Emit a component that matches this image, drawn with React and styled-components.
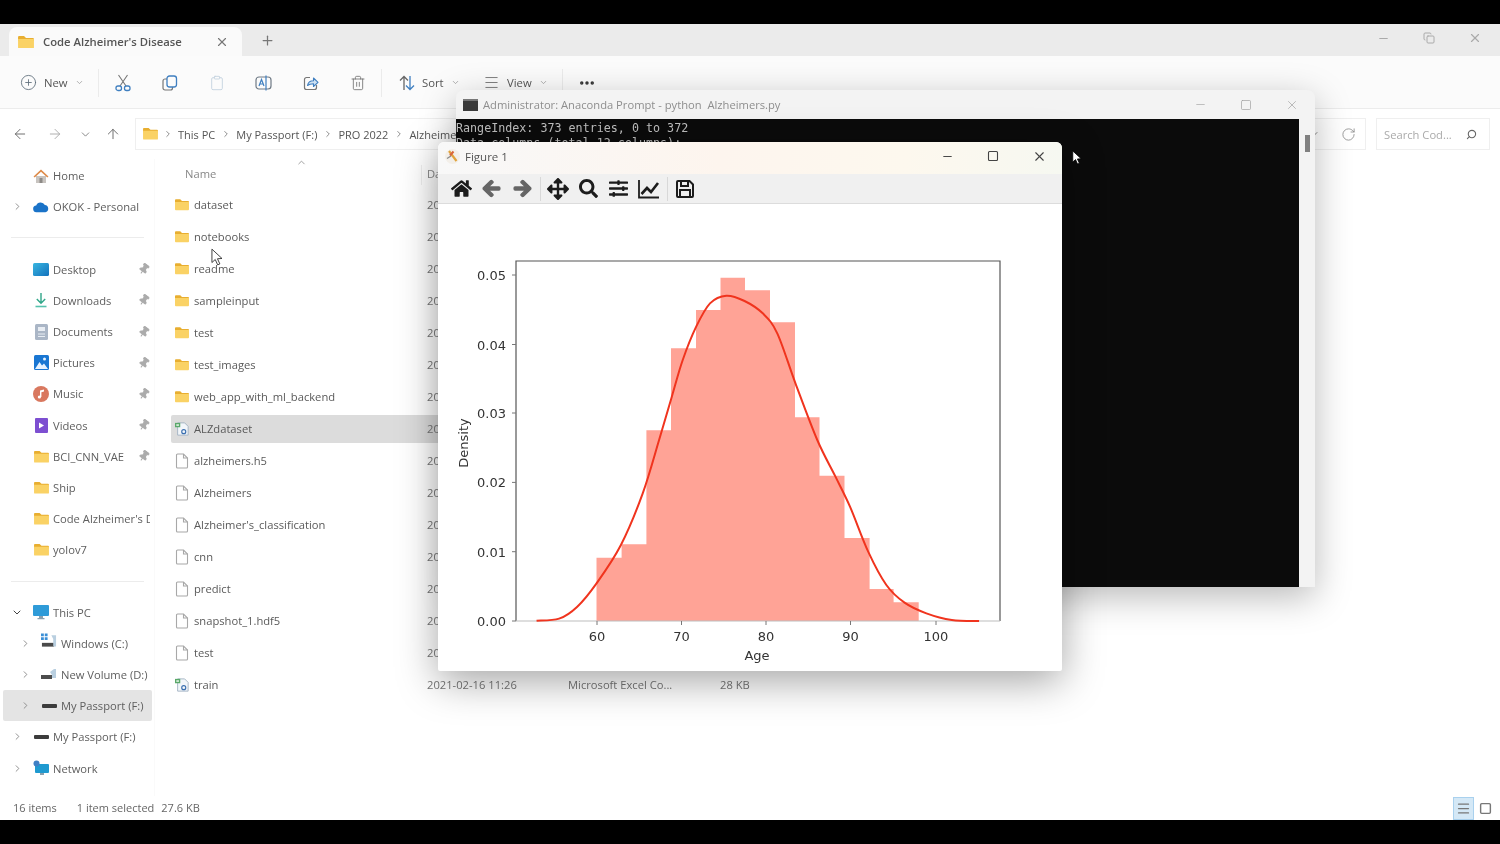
import React from "react";
import styled, { createGlobalStyle } from "styled-components";
import { Copy, Clipboard, Trash2, ChevronDown, ChevronRight, ChevronUp, ArrowLeft, ArrowRight, ArrowUp, Plus, X, Minus, Square, RotateCw, Search, Pin, Menu, MoreHorizontal, CirclePlus } from "lucide-react";
import { FaHome, FaArrowLeft, FaArrowRight, FaArrowsAlt, FaSearch, FaSlidersH } from "react-icons/fa";

const Global = createGlobalStyle`
  html, body { margin: 0; padding: 0; background: #000; overflow: hidden; }
  * { box-sizing: border-box; }
`;

const Stage = styled.div`
  position: relative; width: 1500px; height: 844px; padding-top: 24px; background: #000;
  font-family: "Open Sans", "Noto Sans", sans-serif; color: #5a5a5a; overflow: hidden; filter: blur(0.35px);
`;
const Explorer = styled.div`
  height: 796px; display: flex; flex-direction: column; background: #fff;
`;
const TabBar = styled.div`
  height: 32px; flex: none; display: flex; align-items: flex-end; background: #ebebeb; padding-left: 9px;
`;
const Tab = styled.div`
  width: 233px; height: 29px; background: #fafafa; border-radius: 8px 8px 0 0; display: flex; align-items: center;
  padding: 0 13px 0 9px; font-size: 11.3px; font-weight: 600; color: #555;
`;
const TabTitle = styled.span`margin-left: 9px; flex: 1; white-space: nowrap;`;
const NewTab = styled.div`margin: 0 0 4px 18px; height: 24px; display: flex; align-items: center; color: #777;`;
const WinControls = styled.div`
  margin-left: auto; align-self: stretch; display: flex; align-items: center; padding: 0 ${p => p.$pr || 0}px ${p => p.$pb || 0}px 0; color: ${p => p.$c || "#aaa"};
`;
const WinCtl = styled.div`width: 46px; display: flex; justify-content: center; align-items: center;`;

const CommandBar = styled.div`
  height: 53px; flex: none; display: flex; align-items: center; padding: 1px 0 0 12px; background: #fbfbfb; border-bottom: 1px solid #ececec;
`;
const CmdText = styled.span`font-size: 11.3px; color: #555; white-space: nowrap;`;
const CmdBtn = styled.div`
  width: ${p => p.$w}px; height: 32px; flex: none; display: flex; align-items: center; justify-content: ${p => p.$center ? "center" : "flex-start"};
  padding-left: ${p => p.$pl || 0}px; gap: ${p => p.$gap || 0}px; color: ${p => p.$c || "#6a6a6a"};
`;
const CmdSep = styled.div`width: 1px; height: 28px; flex: none; background: #ebebeb;`;

const AddressRow = styled.div`
  height: 50px; flex: none; display: flex; align-items: center; padding: 0 10px 0 5px; background: #fff;
`;
const NavBtn = styled.div`
  width: ${p => p.$w}px; flex: none; display: flex; justify-content: center; color: ${p => p.$c || "#666"};
`;
const AddressBox = styled.div`
  flex: 1; margin-left: 4px; height: 32px; border: 1px solid #efefef; display: flex; align-items: center; padding: 0 9px 0 7px; font-size: 11px; color: #555;
`;
const Crumb = styled.span`white-space: nowrap;`;
const CrumbSep = styled.span`display: flex; width: ${p => p.$w || 21}px; flex: none; justify-content: center; color: #777;`;
const AddressEnd = styled.div`margin-left: auto; display: flex; align-items: center; gap: 21px; color: #888;`;
const SearchBox = styled.div`
  width: 114px; height: 32px; margin-left: 10px; flex: none; border: 1px solid #efefef; display: flex; align-items: center; justify-content: space-between;
  padding: 0 12px 0 7px; font-size: 11.2px; color: #aaa;
`;

const Body = styled.div`flex: 1; min-height: 0; display: flex;`;
const Sidebar = styled.nav`
  width: 155px; flex: none; padding-top: 1px; border-right: 1px solid #fafafa; font-size: 11.2px; color: #5e5e5e;
`;
const SideRow = styled.div`
  height: 31.2px; width: 149px; margin-left: 3px; padding: 0 2px 0 ${p => 8 + (p.$indent || 0)}px; display: flex; align-items: center; border-radius: 2px;
  background: ${p => p.$selected ? "#e4e4e4" : "transparent"}; white-space: nowrap;
`;
const ChevronSlot = styled.span`width: 12px; flex: none; display: flex; justify-content: center; color: #888; margin-right: 10px;`;
const SideIcon = styled.span`width: 16px; height: 16px; flex: none; display: flex; align-items: center; justify-content: center;`;
const SideLabel = styled.span`margin-left: 4px; overflow: hidden; flex: 1; min-width: 0;`;
const PinMark = styled.span`flex: none; width: 12px; display: flex; color: #ababab; transform: rotate(35deg); margin-left: 2px;`;
const SideRule = styled.div`height: 31.2px; display: flex; align-items: center; padding-left: 11px;
  &::after { content: ""; width: 133px; height: 1px; background: #ececec; }`;

const FileList = styled.div`margin-left: 16px; width: 1140px; flex: none; display: flex; flex-direction: column; font-size: 11.2px; color: #5a5a5a;`;
const HeaderRow = styled.div`
  height: 29.5px; flex: none; display: grid; grid-template-columns: 256px 141px 152px 1fr; align-items: center; color: #888;
`;
const HeaderName = styled.div`
  display: flex; align-items: center; padding-left: 14px; height: 100%; position: relative;
  &::after { content: ""; position: absolute; right: 5px; top: 6px; bottom: 4px; width: 1px; background: #eee; }
`;
const SortCaret = styled.span`display: flex; margin-left: 80px; transform: translateY(-11px); color: #999;`;
const FileRow = styled.div`
  height: 28px; flex: none; margin: 2px 0; display: grid; grid-template-columns: 256px 141px 152px 1fr; align-items: center; background: ${p => p.$selected ? "#dcdcdc" : "transparent"};
  border-radius: 2px; white-space: nowrap;
`;
const FileName = styled.div`display: flex; align-items: center; gap: 5px; padding-left: 4px;`;
const FileIconSlot = styled.span`width: 14px; height: 16px; flex: none; display: flex; align-items: center; justify-content: center;`;
const Muted = styled.div`color: #777;`;

const StatusBar = styled.div`
  height: 24px; flex: none; display: flex; align-items: center; font-size: 11px; color: #666; padding: 0 0 0 13px; background: #fff;
`;
const StatusText = styled.span`margin-right: ${p => p.$mr}px; white-space: nowrap; transform: translateY(-1px);`;
const ViewBtn = styled.span`
  width: 21px; height: 23px; display: flex; align-items: center; justify-content: center; color: #777; flex: none;
  background: ${p => p.$on ? "#d4e8f6" : "transparent"}; border: 1px solid ${p => p.$on ? "#a9d1ee" : "transparent"};
`;
const ViewBtns = styled.div`margin-left: auto; display: flex; gap: 1px; padding-right: 4px;`;

const ConsoleWin = styled.section`
  position: absolute; left: 456px; top: 90px; width: 859px; height: 497px; display: flex; flex-direction: column;
  background: #f3f3f3; border-radius: 8px 8px 0 0; box-shadow: 0 10px 36px rgba(0,0,0,.28); overflow: hidden;
`;
const ConsoleTitle = styled.header`
  height: 29px; flex: none; display: flex; align-items: center; padding-left: 7px; font-size: 11.2px; color: #8e8e8e;
`;
const ConsoleName = styled.span`margin-left: 5px; flex: 1; white-space: pre;`;
const ConsoleBody = styled.div`flex: 1; min-height: 0; display: flex;`;
const Terminal = styled.pre`
  flex: 1; margin: 0; background: #0b0b0b; color: #c0c0c0; font: 11.7px/14.5px "DejaVu Sans Mono", monospace; padding: 2px 0 0 0; overflow: hidden;
`;
const ScrollTrack = styled.div`width: 16px; flex: none; padding: 16px 0 0 6px;`;
const ScrollThumb = styled.div`width: 5px; height: 17px; background: #808080;`;

const FigureWin = styled.section`
  position: absolute; left: 438px; top: 142px; width: 624px; height: 529px; display: flex; flex-direction: column;
  background: #fff; border-radius: 6px 6px 2px 2px; box-shadow: 0 10px 40px rgba(0,0,0,.36); overflow: hidden;
`;
const FigureTitle = styled.header`
  height: 32px; flex: none; display: flex; align-items: center; padding: 0 0 4px 7px; font-size: 11.5px; color: #555;
  background: linear-gradient(90deg, #f8f8f8, #fdf5ee 45%, #fdf8ee 75%, #f6f8f1);
`;
const FigureName = styled.span`margin-left: 5px; flex: 1;`;
const FigureTools = styled.div`
  height: 30px; flex: none; display: flex; align-items: center; padding-left: 8px; background: #f0f0f0; border-bottom: 1px solid #dcdcdc; color: #1c1c1c;
`;
const ToolBtn = styled.span`width: 30.5px; flex: none; display: flex; justify-content: center; color: ${p => p.$c || "#1c1c1c"};`;
const ToolSep = styled.span`width: 1px; height: 24px; flex: none; margin: 0 2px; background: #d8d8d8;`;
const PlotArea = styled.div`flex: 1; min-height: 0; display: flex;`;
const Cursor = styled.svg`position: absolute; left: ${p => p.$x}px; top: ${p => p.$y}px;`;

const Folder = ({ s = 15 }) => (
  <svg width={s} height={s * 0.87} viewBox="0 0 16 14">
    <path d="M0 2a1 1 0 0 1 1-1h5l2 2h7a1 1 0 0 1 1 1v2H0z" fill="#e8ae30" />
    <path d="M0 4h16v8.5a1 1 0 0 1-1 1H1a1 1 0 0 1-1-1z" fill="#fad265" />
  </svg>
);
const Doc = () => (
  <svg width="14" height="16" viewBox="0 0 14 16" fill="#fff" stroke="#a8a8a8" strokeWidth="1.1">
    <path d="M1.5 2a1 1 0 0 1 1-1h6l4 4v9a1 1 0 0 1-1 1h-9a1 1 0 0 1-1-1z" />
    <path d="M8.5 1v4h4" fill="none" />
  </svg>
);
const Sheet = () => (
  <svg width="16" height="16" viewBox="0 0 16 16">
    <path d="M3 1h8l4 4v10H3z" fill="#f2f6fa" stroke="#9fb0c0" />
    <rect x="0" y="1" width="6" height="5" fill="#5aa86a" />
    <rect x="1.5" y="2.5" width="3" height="2" fill="#d7ecd9" />
    <circle cx="10" cy="11" r="2.3" fill="none" stroke="#3a6fb0" strokeWidth="1.3" />
  </svg>
);
const HomeIco = () => (
  <svg width="16" height="16" viewBox="0 0 16 16">
    <path d="M3 8h10v7H3z" fill="#c8c4c0" /><path d="M6.5 10h3v5h-3z" fill="#8d8a86" />
    <path d="M8 1.5 15.5 8.5l-1.2 1L8 3.7 1.7 9.5.5 8.5z" fill="#de8a48" />
  </svg>
);
const CloudIco = () => (
  <svg width="17" height="12" viewBox="0 0 17 12">
    <path d="M4 11.5a3.5 3.5 0 0 1-.6-7A5 5 0 0 1 12.6 4 3.8 3.8 0 0 1 13.2 11.5z" fill="#1a73c8" />
  </svg>
);
const DesktopIco = () => (
  <svg width="16" height="13" viewBox="0 0 16 13">
    <defs><linearGradient id="dg" x1="0" y1="0" x2="1" y2="1"><stop offset="0" stopColor="#39b6e0" /><stop offset="1" stopColor="#1372bd" /></linearGradient></defs>
    <rect width="16" height="13" rx="1.5" fill="url(#dg)" />
  </svg>
);
const DownIco = () => (
  <svg width="14" height="16" viewBox="0 0 14 16" fill="none" stroke="#2fa588" strokeWidth="1.4">
    <path d="M7 1v10M2.8 7 7 11.2 11.2 7" /><path d="M1.5 14.5h11" stroke="#57c2ad" strokeWidth="1.6" />
  </svg>
);
const DocsIco = () => (
  <svg width="13" height="16" viewBox="0 0 13 16">
    <rect width="13" height="16" rx="1.5" fill="#aab6c6" /><rect x="3" y="3" width="7" height="4" fill="#e8edf3" /><path d="M3 10h7M3 12.5h7" stroke="#e8edf3" />
  </svg>
);
const PicIco = () => (
  <svg width="15" height="15" viewBox="0 0 15 15">
    <rect width="15" height="15" rx="1.5" fill="#1976d2" /><path d="M1 14 5.5 7 8 10.5 10 8.5 14 14z" fill="#e6f2ff" /><circle cx="10.5" cy="4" r="1.5" fill="#e6f2ff" />
  </svg>
);
const MusicIco = () => (
  <svg width="16" height="16" viewBox="0 0 16 16">
    <circle cx="8" cy="8" r="8" fill="#d9785f" /><path d="M7 11V4.5l4-1v2l-2.6.7V11" fill="#fff" /><circle cx="6.4" cy="11" r="1.6" fill="#fff" />
  </svg>
);
const VideoIco = () => (
  <svg width="13" height="15" viewBox="0 0 13 15">
    <rect width="13" height="15" rx="1" fill="#7d4fd1" /><path d="M4 4.5v6l5-3z" fill="#fff" />
  </svg>
);
const PcIco = () => (
  <svg width="16" height="15" viewBox="0 0 16 15">
    <rect width="16" height="11" rx="1" fill="#2f9bd8" /><path d="M6 11h4v2H6zM4.5 13h7v1.3h-7z" fill="#8aa0ae" />
  </svg>
);
const WinDriveIco = () => (
  <svg width="17" height="15" viewBox="0 0 17 15" style={{ transform: "translateY(-3px)" }}>
    <path d="M0 0h3v3H0zM4 0h3v3H4zM0 4h3v3H0zM4 4h3v3H4z" fill="#3b8fd6" />
    <rect x="1" y="10" width="13" height="4" fill="#4a4a4a" /><path d="M11 2h5v12h-3V6z" fill="#b9cfe0" />
  </svg>
);
const VolumeIco = () => (
  <svg width="16" height="13" viewBox="0 0 16 13"><rect y="7" width="11" height="4" fill="#4d4d4d" /><path d="M9 4 13 1h2v9h-4V7z" fill="#b9cfe0" /></svg>
);
const DriveIco = () => (
  <svg width="15" height="6" viewBox="0 0 15 6"><rect y="1" width="15" height="4" rx="1" fill="#3c3c3c" /></svg>
);
const NetIco = () => (
  <svg width="16" height="16" viewBox="0 0 16 16">
    <rect x="2" y="4" width="14" height="9" rx="1" fill="#1f9ad0" /><path d="M7 13h4v2H7z" fill="#8aa0ae" /><circle cx="3.5" cy="3.5" r="3" fill="#3f7fc4" />
  </svg>
);
const ScissorsIco = () => (
  <svg width="16" height="18" viewBox="0 0 16 18" fill="none">
    <path d="M3.5 1 11 12M12.5 1 5 12" stroke="#777" strokeWidth="1.1" />
    <rect x="1" y="12" width="5.5" height="4.5" rx="2" stroke="#3f7fc0" strokeWidth="1.3" />
    <rect x="9.5" y="12" width="5.5" height="4.5" rx="2" stroke="#3f7fc0" strokeWidth="1.3" />
  </svg>
);
const CopyIco = () => (
  <svg width="16" height="16" viewBox="0 0 16 16" fill="none">
    <rect x="1" y="4" width="9.5" height="11" rx="2" stroke="#777" strokeWidth="1.2" />
    <rect x="5" y="1" width="9.5" height="11" rx="2.5" fill="#fbfbfb" stroke="#3f7fc0" strokeWidth="1.3" />
  </svg>
);
const RenameIco = () => (
  <svg width="17" height="16" viewBox="0 0 17 16" fill="none">
    <rect x="1" y="2" width="15" height="12" rx="3" stroke="#6f7a85" strokeWidth="1.2" />
    <path d="M4 11 6.5 4.5 9 11M5 9h3" stroke="#3f7fc0" strokeWidth="1.2" />
    <path d="M11 0.5v15" stroke="#3f7fc0" strokeWidth="1.2" />
  </svg>
);
const ShareIco = () => (
  <svg width="16" height="16" viewBox="0 0 16 16" fill="none">
    <path d="M7 2.5H3.5a2 2 0 0 0-2 2v8a2 2 0 0 0 2 2h8a2 2 0 0 0 2-2V10" stroke="#777" strokeWidth="1.2" />
    <path d="M4.5 10.5c.5-3 2.5-4.7 6-4.7V3l4.5 4.3-4.5 4.2V8.7c-2.4 0-4.4.4-6 1.8z" fill="#cfe2f3" stroke="#3f7fc0" strokeWidth="1.1" strokeLinejoin="round" />
  </svg>
);
const SortIco = () => (
  <svg width="16" height="16" viewBox="0 0 16 16" fill="none" strokeWidth="1.3">
    <path d="M5 15V1.5M1 5.5l4-4 4 4" stroke="#666" />
    <path d="M11 1v13.5M7 10.5l4 4 4-4" stroke="#3f7fc0" />
  </svg>
);
const ChartTool = () => (
  <svg width="22" height="20" viewBox="0 0 22 20" fill="none" stroke="#1c1c1c">
    <path d="M1 1v17.5h20" strokeWidth="1.8" />
    <path d="M3.5 15 9 9l4 4 7-9" strokeWidth="2.6" />
  </svg>
);
const SaveTool = () => (
  <svg width="20" height="20" viewBox="0 0 20 20" fill="none" stroke="#1c1c1c" strokeWidth="2">
    <path d="M2 3a1 1 0 0 1 1-1h11.5L18 5.5V17a1 1 0 0 1-1 1H3a1 1 0 0 1-1-1z" />
    <path d="M6 2v5h7V2M5 18v-7h10v7" />
  </svg>
);
const FigureLogo = () => (
  <svg width="15" height="15" viewBox="0 0 15 15">
    <circle cx="7.5" cy="7.5" r="7.5" fill="#f3efe9" />
    <path d="M4 2 11.5 12" stroke="#e0a33c" strokeWidth="2.2" />
    <path d="M8.5 2.5 5 6.5" stroke="#d8643c" strokeWidth="2" />
    <path d="M2 9.5 6 7" stroke="#8a8a8a" strokeWidth="1.4" />
  </svg>
);

const navPinned = [
  ["Desktop", <DesktopIco />], ["Downloads", <DownIco />], ["Documents", <DocsIco />], ["Pictures", <PicIco />],
  ["Music", <MusicIco />], ["Videos", <VideoIco />], ["BCI_CNN_VAE", <Folder />],
];
const navFolders = ["Ship", "Code Alzheimer's Disease", "yolov7"];
const folders = ["dataset", "notebooks", "readme", "sampleinput", "test", "test_images", "web_app_with_ml_backend"];
const files = [
  ["ALZdataset", "sheet", true], ["alzheimers.h5", "doc"], ["Alzheimers", "doc"], ["Alzheimer's_classification", "doc"],
  ["cnn", "doc"], ["predict", "doc"], ["snapshot_1.hdf5", "doc"], ["test", "doc"], ["train", "sheet"],
];

const Row = ({ icon, label, chevron, indent, selected, pin }) => (
  <SideRow $indent={indent} $selected={selected}>
    <ChevronSlot>
      {chevron === "right" && <ChevronRight size={11} />}
      {chevron === "down" && <ChevronDown size={13} color="#444" />}
    </ChevronSlot>
    <SideIcon>{icon}</SideIcon>
    <SideLabel>{label}</SideLabel>
    {pin && <PinMark><Pin size={12} fill="currentColor" /></PinMark>}
  </SideRow>
);

const edges = [596.5, 621.6, 646.4, 671, 696, 720.5, 745, 770, 795, 819.5, 844.5, 869.6, 893.6, 918.7];
const tops = [557.7, 544.3, 430.3, 348.3, 310, 277.7, 290.3, 322.3, 417.3, 475.7, 538, 589, 602.3];
const barsPath = "M596.5 621" + tops.map((t, i) => ` V${t} H${edges[i + 1]}`).join("") + " V621 Z";
const kde = [[238,1112],[300,1106],[350,1070],[403,1000],[470,885],[530,730],[575,570],[610,440],[640,330],[677,230],[715,160],[760,137],[810,153],[860,190],[900,250],[950,400],[1010,570],[1060,680],[1100,770],[1150,905],[1200,1005],[1250,1058],[1310,1090],[1380,1110],[1455,1113]]
  .map(([x, y]) => [x / 2.75 + 450, y / 3 + 250]);
const smooth = pts => {
  let d = `M${pts[0][0]} ${pts[0][1]}`;
  for (let i = 0; i < pts.length - 1; i++) {
    const p0 = pts[Math.max(i - 1, 0)], p1 = pts[i], p2 = pts[i + 1], p3 = pts[Math.min(i + 2, pts.length - 1)];
    d += ` C${p1[0] + (p2[0] - p0[0]) / 6} ${p1[1] + (p2[1] - p0[1]) / 6} ${p2[0] - (p3[0] - p1[0]) / 6} ${p2[1] - (p3[1] - p1[1]) / 6} ${p2[0]} ${p2[1]}`;
  }
  return d;
};
const xTicks = [[597, "60"], [681.5, "70"], [766, "80"], [850.5, "90"], [936, "100"]];
const yTicks = [[621, "0.00"], [551.7, "0.01"], [482.4, "0.02"], [413, "0.03"], [344.5, "0.04"], [275, "0.05"]];
const tickFont = { fontFamily: "'DejaVu Sans', sans-serif", fontSize: 13, fill: "#333" };

const Chart = () => (
  <svg width="624" height="467" viewBox="438 204 624 467">
    <path d={barsPath} fill="#ffa396" />
    <path d="M516 621V261H1000V621" fill="none" stroke="#555" strokeWidth="1.2" />
    <path d="M516 621H1000" fill="none" stroke="#bdbdbd" strokeWidth="1.2" />
    <path d={smooth(kde)} fill="none" stroke="#f0341e" strokeWidth="2" />
    {xTicks.map(([x, t]) => (
      <g key={t}>
        <path d={`M${x} 621v4`} stroke="#777" />
        <text x={x} y={641} textAnchor="middle" {...tickFont}>{t}</text>
      </g>
    ))}
    {yTicks.map(([y, t]) => (
      <g key={t}>
        <path d={`M512 ${y}h4`} stroke="#777" />
        <text x={506} y={y + 5} textAnchor="end" {...tickFont}>{t}</text>
      </g>
    ))}
    <text x={757} y={660} textAnchor="middle" {...tickFont}>Age</text>
    <text transform="translate(468 443) rotate(-90)" textAnchor="middle" {...tickFont}>Density</text>
  </svg>
);

const ArrowCursor = ({ x, y, w, h, fill, stroke }) => (
  <Cursor $x={x} $y={y} width={w} height={h} viewBox="0 0 13 19">
    <path d="M1 1v14.5l3.6-3.3 2.6 5.8 2.4-1-2.6-5.6 4.9-.3z" fill={fill} stroke={stroke} strokeWidth="1" />
  </Cursor>
);

export default function App() {
  return (
    <Stage>
      <Global />
      <Explorer>
        <TabBar>
          <Tab>
            <Folder s={16} />
            <TabTitle>Code Alzheimer's Disease</TabTitle>
            <X size={14} color="#777" />
          </Tab>
          <NewTab><Plus size={15} /></NewTab>
          <WinControls $pb={4} $pr={2}>
            <WinCtl><Minus size={13} /></WinCtl>
            <WinCtl><Copy size={12} /></WinCtl>
            <WinCtl><X size={14} /></WinCtl>
          </WinControls>
        </TabBar>
        <CommandBar>
          <CmdBtn $w={86} $pl={8} $gap={7}>
            <CirclePlus size={17} strokeWidth={1.2} color="#5c6b78" /><CmdText>New</CmdText><ChevronDown size={9} color="#999" />
          </CmdBtn>
          <CmdSep />
          <CmdBtn $w={47} $center><ScissorsIco /></CmdBtn>
          <CmdBtn $w={47} $center><CopyIco /></CmdBtn>
          <CmdBtn $w={47} $center $c="#c3d2de"><Clipboard size={16} strokeWidth={1.3} /></CmdBtn>
          <CmdBtn $w={47} $center><RenameIco /></CmdBtn>
          <CmdBtn $w={47} $center><ShareIco /></CmdBtn>
          <CmdBtn $w={47} $center $c="#6a6a6a"><Trash2 size={16} strokeWidth={1.2} /></CmdBtn>
          <CmdSep />
          <CmdBtn $w={84} $pl={17} $gap={7}>
            <SortIco /><CmdText>Sort</CmdText><ChevronDown size={9} color="#999" />
          </CmdBtn>
          <CmdBtn $w={96} $pl={17} $gap={7}>
            <Menu size={17} strokeWidth={1.2} /><CmdText>View</CmdText><ChevronDown size={9} color="#999" />
          </CmdBtn>
          <CmdSep />
          <CmdBtn $w={47} $center $c="#333"><MoreHorizontal size={18} strokeWidth={2.6} /></CmdBtn>
        </CommandBar>
        <AddressRow>
          <NavBtn $w={30}><ArrowLeft size={16} strokeWidth={1.4} /></NavBtn>
          <NavBtn $w={40} $c="#aaa"><ArrowRight size={16} strokeWidth={1.4} /></NavBtn>
          <NavBtn $w={20}><ChevronDown size={13} strokeWidth={1.4} /></NavBtn>
          <NavBtn $w={36}><ArrowUp size={16} strokeWidth={1.4} /></NavBtn>
          <AddressBox>
            <Folder s={15} />
            <CrumbSep $w={20}><ChevronRight size={10} /></CrumbSep>
            <Crumb>This PC</Crumb>
            <CrumbSep><ChevronRight size={10} /></CrumbSep>
            <Crumb>My Passport (F:)</Crumb>
            <CrumbSep><ChevronRight size={10} /></CrumbSep>
            <Crumb>PRO 2022</Crumb>
            <CrumbSep><ChevronRight size={10} /></CrumbSep>
            <Crumb>Alzheimer</Crumb>
            <AddressEnd>
              <ChevronDown size={12} />
              <RotateCw size={15} strokeWidth={1.3} />
            </AddressEnd>
          </AddressBox>
          <SearchBox>Search Cod...<Search size={11} strokeWidth={2.4} color="#666" style={{ transform: "scaleX(-1)" }} /></SearchBox>
        </AddressRow>
        <Body>
          <Sidebar>
            <Row icon={<HomeIco />} label="Home" />
            <Row icon={<CloudIco />} label="OKOK - Personal" chevron="right" />
            <SideRule />
            {navPinned.map(([l, ic]) => <Row key={l} icon={ic} label={l} pin />)}
            {navFolders.map(l => <Row key={l} icon={<Folder />} label={l} />)}
            <SideRule />
            <Row icon={<PcIco />} label="This PC" chevron="down" />
            <Row icon={<WinDriveIco />} label="Windows (C:)" chevron="right" indent={8} />
            <Row icon={<VolumeIco />} label="New Volume (D:)" chevron="right" indent={8} />
            <Row icon={<DriveIco />} label="My Passport (F:)" chevron="right" indent={8} selected />
            <Row icon={<DriveIco />} label="My Passport (F:)" chevron="right" />
            <Row icon={<NetIco />} label="Network" chevron="right" />
          </Sidebar>
          <FileList>
            <HeaderRow>
              <HeaderName>Name<SortCaret><ChevronUp size={11} /></SortCaret></HeaderName>
              <div>Date modified</div>
            </HeaderRow>
            {folders.map(n => (
              <FileRow key={n}>
                <FileName><FileIconSlot><Folder /></FileIconSlot>{n}</FileName>
                <Muted>2023-01-12 10:42</Muted>
              </FileRow>
            ))}
            {files.map(([n, kind, sel]) => (
              <FileRow key={n + kind} $selected={sel}>
                <FileName><FileIconSlot>{kind === "doc" ? <Doc /> : <Sheet />}</FileIconSlot>{n}</FileName>
                <Muted>2021-02-16 11:26</Muted>
                {n === "train" && <Muted>Microsoft Excel Co...</Muted>}
                {n === "train" && <Muted>28 KB</Muted>}
              </FileRow>
            ))}
          </FileList>
        </Body>
        <StatusBar>
          <StatusText $mr={20}>16 items</StatusText>
          <StatusText $mr={7}>1 item selected</StatusText>
          <StatusText>27.6 KB</StatusText>
          <ViewBtns>
            <ViewBtn $on><Menu size={15} /></ViewBtn>
            <ViewBtn><Square size={13} strokeWidth={2.6} /></ViewBtn>
          </ViewBtns>
        </StatusBar>
      </Explorer>

      <ConsoleWin>
        <ConsoleTitle>
          <svg width="15" height="12" viewBox="0 0 15 12"><rect width="15" height="12" fill="#3a3a3a" /><rect width="15" height="2" fill="#777" /></svg>
          <ConsoleName>Administrator: Anaconda Prompt - python  Alzheimers.py</ConsoleName>
          <WinControls $c="#a0a0a0">
            <WinCtl><Minus size={13} strokeWidth={1.2} /></WinCtl>
            <WinCtl><Square size={12} strokeWidth={1.4} /></WinCtl>
            <WinCtl><X size={14} strokeWidth={1.2} /></WinCtl>
          </WinControls>
        </ConsoleTitle>
        <ConsoleBody>
          <Terminal>{"RangeIndex: 373 entries, 0 to 372\nData columns (total 12 columns):"}</Terminal>
          <ScrollTrack><ScrollThumb /></ScrollTrack>
        </ConsoleBody>
      </ConsoleWin>

      <FigureWin>
        <FigureTitle>
          <FigureLogo />
          <FigureName>Figure 1</FigureName>
          <WinControls $c="#444">
            <WinCtl><Minus size={13} strokeWidth={1.8} /></WinCtl>
            <WinCtl><Square size={12} strokeWidth={2.2} /></WinCtl>
            <WinCtl><X size={15} strokeWidth={1.8} /></WinCtl>
          </WinControls>
        </FigureTitle>
        <FigureTools>
          <ToolBtn><FaHome size={21} /></ToolBtn>
          <ToolBtn $c="#666"><FaArrowLeft size={19} stroke="currentColor" strokeWidth={40} /></ToolBtn>
          <ToolBtn $c="#666"><FaArrowRight size={19} stroke="currentColor" strokeWidth={40} /></ToolBtn>
          <ToolSep />
          <ToolBtn><FaArrowsAlt size={22} /></ToolBtn>
          <ToolBtn><FaSearch size={19} /></ToolBtn>
          <ToolBtn><FaSlidersH size={19} /></ToolBtn>
          <ToolBtn><ChartTool /></ToolBtn>
          <ToolSep />
          <ToolBtn><SaveTool /></ToolBtn>
        </FigureTools>
        <PlotArea><Chart /></PlotArea>
      </FigureWin>

      <ArrowCursor x={211} y={248} w={12} h={18} fill="#fff" stroke="#333" />
      <ArrowCursor x={1072} y={150} w={10} h={15} fill="#fff" stroke="#000" />
    </Stage>
  );
}
